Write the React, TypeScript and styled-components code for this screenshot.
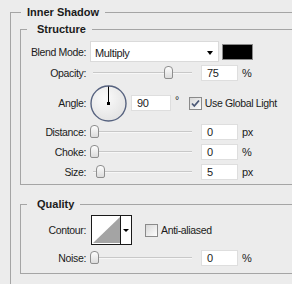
import React from 'react';
import styled, { createGlobalStyle } from 'styled-components';

const GlobalStyle = createGlobalStyle`
    html, body {
        margin: 0;
        padding: 0;
        background: #ececec;
        overflow: hidden;
    }
    body {
        font-family: "Liberation Sans", Arial, sans-serif;
        font-size: 10.5px;
        letter-spacing: -0.35px;
        color: #1b1b1b;
    }
`;

const LINE = '#a5a5a5';

const StyledPanel = styled.div`
    border-left: 1px solid ${LINE};
    border-top: 1px solid ${LINE};
    box-sizing: border-box;
    height: calc(100vh - 12px);
    margin: 12px 0 0 10px;
    padding-left: 9px;
`;

const StyledGroup = styled.div<{ $top: number }>`
    border: 1px solid ${LINE};
    border-right: none;
    margin-top: ${props => props.$top}px;
`;

const StyledTitle = styled.div<{ $inset: number, $pad: number }>`
    background: #ececec;
    font-size: 11px;
    font-weight: bold;
    height: 13px;
    letter-spacing: 0;
    line-height: 13px;
    margin: -7px 0 0 ${props => props.$inset}px;
    padding: 0 6px 0 ${props => props.$pad}px;
    width: fit-content;
`;

const StyledRows = styled.div<{ $top: number, $bottom: number }>`
    display: flex;
    flex-direction: column;
    padding: ${props => props.$top}px 0 ${props => props.$bottom}px 0;
`;

const StyledRow = styled.div<{ $h: number }>`
    align-items: center;
    display: flex;
    height: ${props => props.$h}px;
`;

const StyledLabel = styled.div`
    flex: none;
    text-align: right;
    white-space: nowrap;
    width: 65px;
`;

const StyledSelect = styled.div`
    align-items: center;
    background: #fff;
    border: 1px solid #dadada;
    box-sizing: border-box;
    display: flex;
    font-size: 11px;
    height: 21px;
    justify-content: space-between;
    margin-left: 4px;
    padding: 2px 5px 0 4px;
    width: 129px;

    &::after {
        border-left: 3.5px solid transparent;
        border-right: 3.5px solid transparent;
        border-top: 4px solid #000;
        content: '';
        display: block;
        margin-top: 1px;
    }
`;

const StyledSwatch = styled.div`
    background: #000;
    border: 1px solid #8a8a8a;
    box-sizing: border-box;
    height: 16px;
    margin-left: 3px;
    width: 31px;
`;

const StyledSlider = styled.div`
    height: 14px;
    margin-left: 4px;
    position: relative;
    width: 104px;

    &::before {
        background: #f7f7f7;
        border-top: 1px solid #c8c8c8;
        content: '';
        height: 1px;
        left: 3px;
        position: absolute;
        right: 2px;
        top: 6px;
    }
`;

const StyledThumb = styled.div`
    background: linear-gradient(#fdfdfd, #dcdcdc);
    border: 1px solid #8e8e8e;
    border-radius: 4px 4px 2px 2px;
    box-sizing: border-box;
    height: 13px;
    position: absolute;
    top: 0;
    width: 9px;
`;

const StyledField = styled.div<{ $w: number, $left: number }>`
    background: #fff;
    border: 1px solid #dedede;
    box-sizing: border-box;
    font-size: 11px;
    height: 16px;
    line-height: 15px;
    margin-left: ${props => props.$left}px;
    padding-left: 5px;
    width: ${props => props.$w}px;
`;

const StyledUnit = styled.span`
    font-size: 11px;
    margin-left: 4px;
`;

const StyledDegree = styled.span`
    align-self: flex-start;
    margin: 10px 0 0 4px;
`;

const StyledCheck = styled.label<{ $left: number }>`
    align-items: center;
    display: flex;
    gap: 3px;
    margin-left: ${props => props.$left}px;
    white-space: nowrap;

    svg {
        display: block;
        flex: none;
    }
`;

const StyledDial = styled.svg`
    display: block;
    flex: none;
    margin-left: 4px;
`;

const StyledContour = styled.svg`
    display: block;
    flex: none;
    margin-left: 5px;
`;

function Slider({ at }: { at: number }) {
    return <StyledSlider>
        <StyledThumb style={{ left: Math.round(at * 99) }} />
    </StyledSlider>
}

function SliderRow({ label, at, value, unit }: { label: string, at: number, value: string, unit: string }) {
    return <StyledRow $h={20}>
        <StyledLabel>{label}</StyledLabel>
        <Slider at={at} />
        <StyledField $w={37} $left={7}>{value}</StyledField>
        <StyledUnit>{unit}</StyledUnit>
    </StyledRow>
}

function CheckBox({ checked }: { checked: boolean }) {
    const id = checked ? 'cbOn' : 'cbOff';
    return <svg width="13" height="13" viewBox="0 0 13 13">
        <defs>
            <linearGradient id={id} x1="0" y1="0" x2="1" y2="1">
                <stop offset="0" stopColor="#d6d6d6" />
                <stop offset="1" stopColor="#ffffff" />
            </linearGradient>
        </defs>
        <rect x="0.5" y="0.5" width="12" height="12" fill={`url(#${id})`} stroke="#8a8a8a" />
        {checked && <path d="M3 6.5 L5.3 9 L10 3.5" fill="none" stroke="#4b5876" strokeWidth="1.8" />}
    </svg>
}

function Dial() {
    return <StyledDial width="37" height="37" viewBox="0 0 37 37">
        <defs>
            <radialGradient id="dialFill" cx="0.4" cy="0.35" r="0.7">
                <stop offset="0" stopColor="#fbfbfb" />
                <stop offset="1" stopColor="#e2e2e2" />
            </radialGradient>
        </defs>
        <circle cx="18.5" cy="18.5" r="17.5" fill="url(#dialFill)" stroke="#56627f" strokeWidth="1.4" />
        <line x1="18.5" y1="1.5" x2="18.5" y2="18.5" stroke="#000" strokeWidth="1" />
        <rect x="17" y="17" width="3" height="3" fill="#000" />
    </StyledDial>
}

function Contour() {
    return <StyledContour width="41" height="30" viewBox="0 0 41 30">
        <rect x="0.5" y="0.5" width="40" height="29" fill="#fff" stroke="#1a1a1a" />
        <polygon points="2,28 29,2 29,28" fill="#a4a4a4" />
        <line x1="29.5" y1="0" x2="29.5" y2="30" stroke="#1a1a1a" />
        <polygon points="32,14 38,14 35,17" fill="#000" />
    </StyledContour>
}

export default function App() {
    return <>
        <GlobalStyle />
        <StyledPanel>
            <StyledTitle $inset={1} $pad={6}>Inner Shadow</StyledTitle>

            <StyledGroup $top={10}>
                <StyledTitle $inset={6} $pad={10}>Structure</StyledTitle>
                <StyledRows $top={5} $bottom={2}>
                    <StyledRow $h={21}>
                        <StyledLabel>Blend Mode:</StyledLabel>
                        <StyledSelect>Multiply</StyledSelect>
                        <StyledSwatch />
                    </StyledRow>
                    <StyledRow $h={22}>
                        <StyledLabel>Opacity:</StyledLabel>
                        <Slider at={0.75} />
                        <StyledField $w={37} $left={7}>75</StyledField>
                        <StyledUnit>%</StyledUnit>
                    </StyledRow>
                    <StyledRow $h={38}>
                        <StyledLabel>Angle:</StyledLabel>
                        <Dial />
                        <StyledField $w={40} $left={4}>90</StyledField>
                        <StyledDegree>°</StyledDegree>
                        <StyledCheck $left={10}>
                            <CheckBox checked />
                            Use Global Light
                        </StyledCheck>
                    </StyledRow>
                    <SliderRow label="Distance:" at={0} value="0" unit="px" />
                    <SliderRow label="Choke:" at={0} value="0" unit="%" />
                    <SliderRow label="Size:" at={0.06} value="5" unit="px" />
                </StyledRows>
            </StyledGroup>

            <StyledGroup $top={19}>
                <StyledTitle $inset={6} $pad={10}>Quality</StyledTitle>
                <StyledRows $top={4} $bottom={2}>
                    <StyledRow $h={30}>
                        <StyledLabel>Contour:</StyledLabel>
                        <Contour />
                        <StyledCheck $left={13}>
                            <CheckBox checked={false} />
                            Anti-aliased
                        </StyledCheck>
                    </StyledRow>
                    <StyledRow $h={26}>
                        <StyledLabel>Noise:</StyledLabel>
                        <Slider at={0} />
                        <StyledField $w={37} $left={7}>0</StyledField>
                        <StyledUnit>%</StyledUnit>
                    </StyledRow>
                </StyledRows>
            </StyledGroup>
        </StyledPanel>
    </>
}
